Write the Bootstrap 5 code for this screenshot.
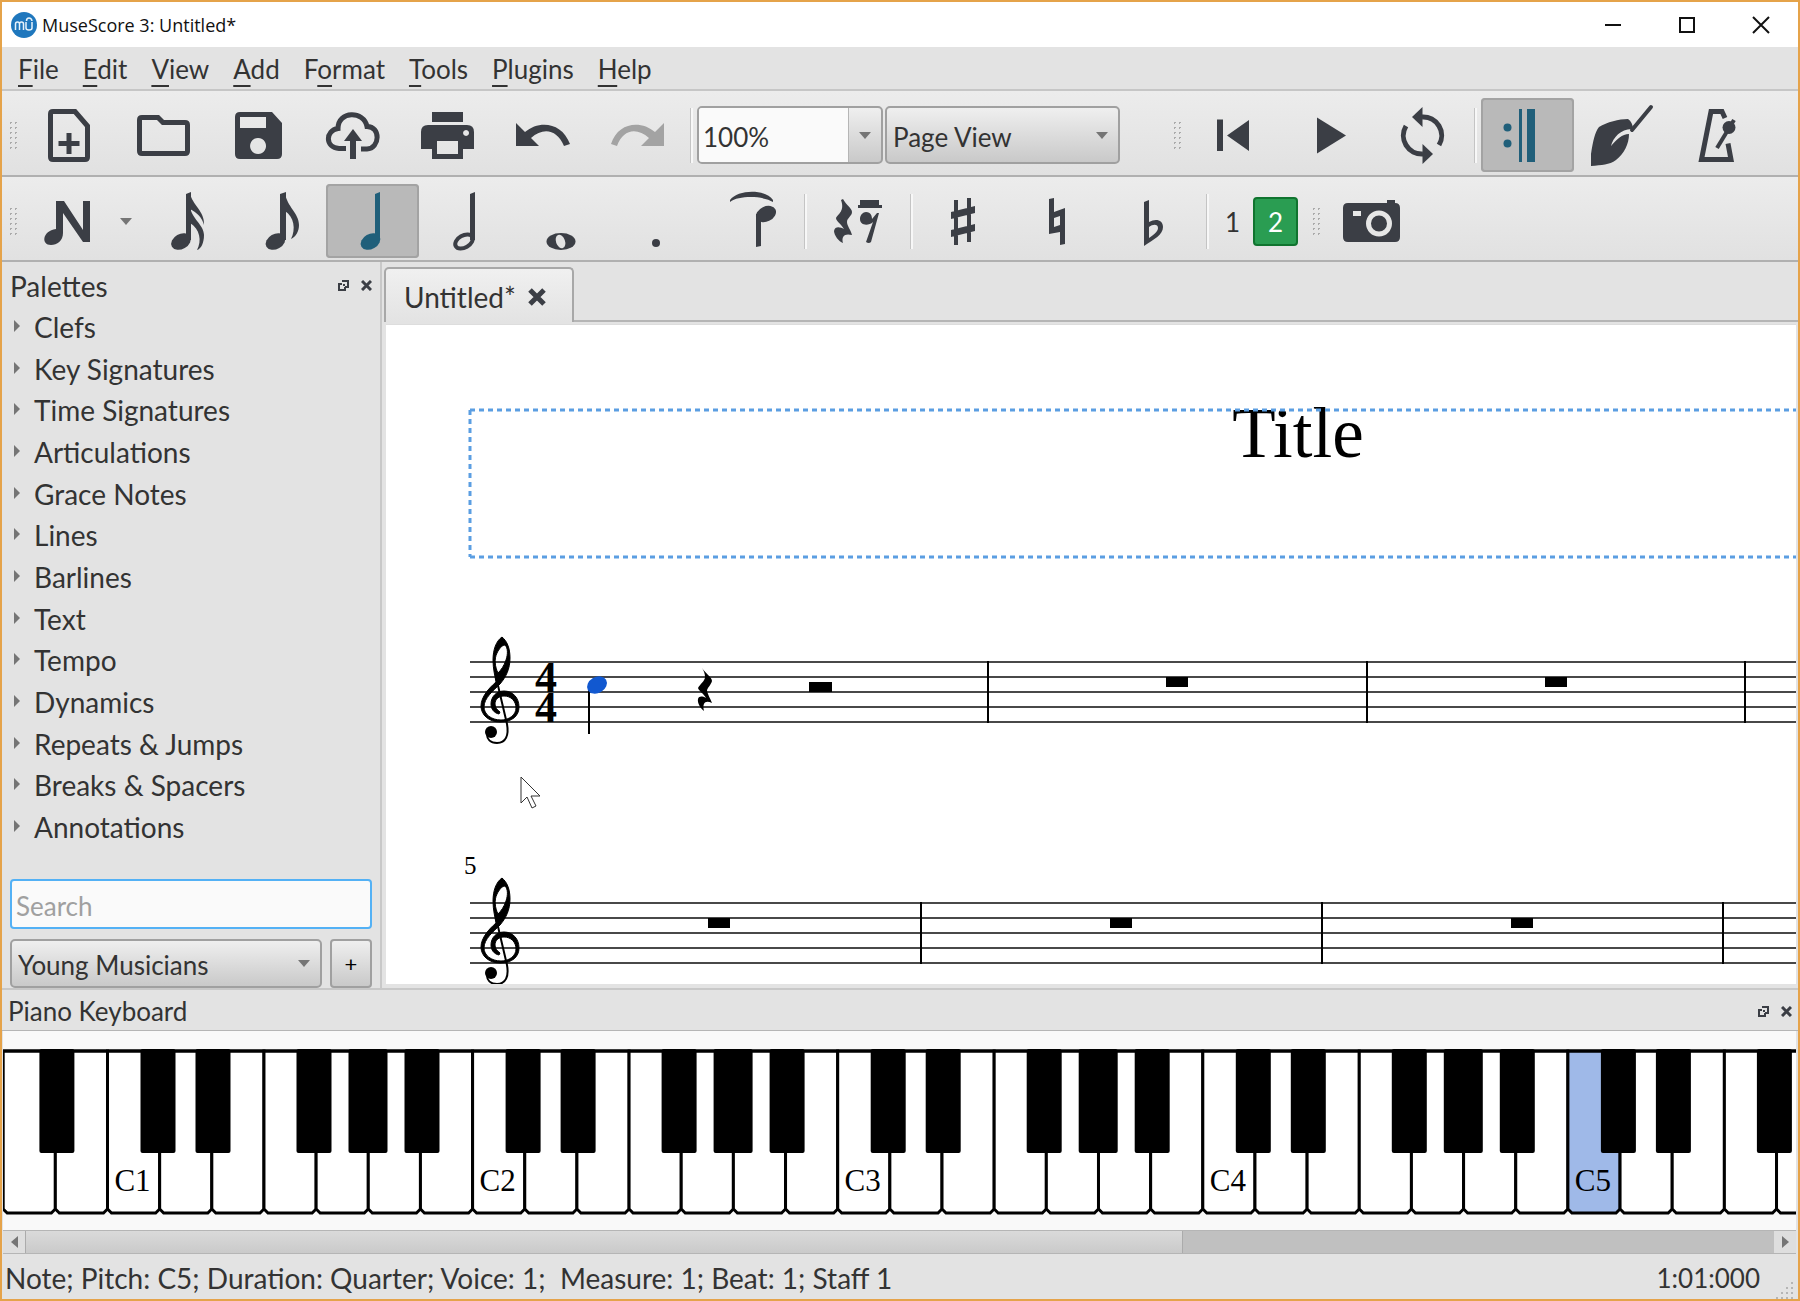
<!DOCTYPE html>
<html lang="en">
<head>
<meta charset="utf-8">
<meta name="viewport" content="width=device-width, initial-scale=1">
<title>MuseScore 3: Untitled*</title>
<link href="https://cdn.jsdelivr.net/npm/bootstrap@5.3.0/dist/css/bootstrap.min.css" rel="stylesheet">
<style>
:root { --ink: #3b3e45; --face: #e3e3e3; --edge: #a0a0a0; }
body { font-family: "Lato", sans-serif; font-size: 26px; line-height: 32px; color: #333; background: var(--face); }
.app-window { height: 100vh; border: 2px solid #e5a34a; overflow: hidden; }
.title-bar { height: 45px; background: #fff; color: #111; font-family: "Open Sans", sans-serif; font-size: 18px; }
.title-bar button { width: 74px; height: 45px; }
.menu-bar { height: 44px; padding: 2px 16px 0; gap: 24px; border-bottom: 2px solid #c6c6c6; }
.menu-bar a { color: #333; text-decoration: none; }
.menu-bar u { text-underline-offset: 6px; text-decoration-thickness: 2px; }
.tool-strip { background: linear-gradient(#ececec, #e1e1e1); border-bottom: 2px solid #b0b0b0; gap: 2px; }
.strip-main { height: 86px; padding-top: 4px; }
.strip-notes { height: 85px; padding-top: 5px; }
.tool-btn { width: 93px; height: 74px; padding: 0; border: 0; background: none; color: var(--ink); flex: none; }
.tool-btn svg, .piano svg, .score svg, .plain-btn svg { display: block; }
.tool-btn[aria-pressed="true"] { background: #b9b9b9; box-shadow: inset 0 0 0 2px #a3a3a3; border-radius: 4px; color: #205f7a; }
.grip { width: 10px; height: 30px; margin: 0 3px 0 6px; flex: none; background: radial-gradient(circle, #aaa 1px, transparent 1px) 0 0 / 5px 5px; }
.grip-play { margin-left: 50px; }
.grip-capture { margin-left: 11px; }
.divider { width: 3px; height: 55px; margin: 0 2px; flex: none; background: #c4c4c4; border-right: 2px solid #f7f7f7; }
.strip-notes .divider { margin: 0 3px; }
.plain-btn { border: 0; padding: 0; background: none; color: var(--ink); }
.options-btn { width: 16px; }
.combo, .combo-edit { border: 2px solid var(--edge); border-radius: 5px; color: #333; font-size: 26px; }
.combo { appearance: none; padding: 3px 6px 0; background: url("data:image/svg+xml,%3Csvg xmlns='http://www.w3.org/2000/svg' width='12' height='7'%3E%3Cpath d='M0 0h12l-6 7z' fill='%23757575'/%3E%3C/svg%3E") no-repeat right 10px center, linear-gradient(#efefef, #c9c9c9); }
.combo-edit { width: 186px; overflow: hidden; background: linear-gradient(#efefef, #c9c9c9); }
.combo-edit input { min-width: 0; border: 0; border-right: 1px solid #b5b5b5; background: #fafafa; color: #333; padding: 3px 4px 0; }
.combo-edit button { width: 32px; flex: none; }
.strip-combo { height: 58px; }
.view-combo { width: 235px; }
.voice-btn { width: 37px; height: 49px; padding: 2px 0 0; border: 0; background: none; color: #333; font-size: 26px; }
.voice-btn[aria-pressed="true"] { width: 45px; background: #2a9d52; color: #fff; border: 2px solid #10742f; border-radius: 4px; }
.main-area { min-height: 0; }
.palette-dock { width: 380px; border-right: 2px solid #c8c8c8; padding: 0 8px; }
.dock-head { height: 43px; gap: 12px; padding-top: 4px; font-size: 28px; }
.palette-list { display: grid; grid-auto-rows: 1fr; flex: 1 1 0; padding: 0; margin: 0; list-style: none; font-size: 28px; }
.palette-list li { display: flex; align-items: center; gap: 14px; padding-left: 4px; }
.palette-list span { padding-top: 2px; }
.search-box { height: 50px; margin-top: 32px; border: 2px solid #53b1f5; border-radius: 4px; background: #fafafa; padding: 3px 4px 0; width: 100%; outline: 0; color: #333; }
.search-box::placeholder { color: #a0a0a0; opacity: 1; }
.palette-foot { height: 49px; margin-top: 10px; }
.add-btn { width: 42px; border: 2px solid var(--edge); border-radius: 4px; background: linear-gradient(#efefef, #c9c9c9); font-size: 22px; padding: 0; }
.doc-area { padding-left: 2px; }
.tabs-row { height: 60px; padding-top: 5px; border-bottom: 2px solid #b5b5b5; }
.doc-tab { height: 55px; width: 190px; padding: 2px 18px 0; gap: 12px; border: 2px solid #a8a8a8; border-bottom: 0; border-radius: 5px 5px 0 0; background: linear-gradient(#f0f0f0, #e3e3e3); font-size: 28px; }
.score { background: #fff; border-top: 1px solid #ddd; margin: 2px 2px 4px 2px; min-height: 0; overflow: hidden; }
.score text, .piano text { font-family: "Liberation Serif", serif; fill: #000; }
.piano-head { height: 43px; gap: 12px; padding: 2px 6px 0; border-top: 2px solid #c8c8c8; border-bottom: 1px solid #b5b5b5; }
.piano { height: 199px; margin: 0 2px 0 1px; background: #f9f9f9; overflow: hidden; }
.scroll-strip { height: 24px; margin: 0 2px 0 1px; background: #c0c0c0; border: 1px solid #b5b5b5; border-width: 1px 0; }
.scroll-strip button { width: 22px; background: #dedede; }
.scroll-thumb { width: 1158px; background: linear-gradient(#dadada, #cacaca); border: 1px solid #ababab; border-width: 0 1px; }
.status-bar { height: 45px; padding: 3px 4px 0 3px; }
.status-note { font-size: 28px; }
.size-grip { width: 18px; height: 18px; }
</style>
</head>
<body>
<div class="app-window d-flex flex-column">
  <header class="title-bar d-flex align-items-center flex-shrink-0">
    <svg class="ms-2 me-1" width="28" height="28" viewBox="0 0 28 28" aria-hidden="true"><circle cx="14" cy="14" r="13" fill="#1f77bd"/><path d="M5.500 19v-6q0-2 2-2t2 2v6m0-6q0-2 2-2t2 2v6M16 11v6q0 2 3 2t3-2v-6M16.500 10q0-3 2.500-3t3 3" fill="none" stroke="#e8f3fb" stroke-width="1.500"/></svg>
    <span>MuseScore 3: Untitled*</span>
    <div class="ms-auto d-flex">
      <button class="plain-btn" aria-label="Minimize"><svg class="mx-auto" width="18" height="18" stroke="#111" stroke-width="2"><path d="M1 9h16"/></svg></button>
      <button class="plain-btn" aria-label="Maximize"><svg class="mx-auto" width="18" height="18" stroke="#111" stroke-width="2" fill="none"><path d="M2 2h14v14H2z"/></svg></button>
      <button class="plain-btn" aria-label="Close"><svg class="mx-auto" width="18" height="18" stroke="#111" stroke-width="2"><path d="M1 1l16 16M17 1L1 17"/></svg></button>
    </div>
  </header>

  <nav class="menu-bar d-flex align-items-center flex-shrink-0" aria-label="Main menu">
    <a href="#"><u>F</u>ile</a><a href="#"><u>E</u>dit</a><a href="#"><u>V</u>iew</a><a href="#"><u>A</u>dd</a><a href="#">F<u>o</u>rmat</a><a href="#"><u>T</u>ools</a><a href="#"><u>P</u>lugins</a><a href="#"><u>H</u>elp</a>
  </nav>

  <div class="tool-strip strip-main d-flex align-items-center flex-shrink-0" role="toolbar" aria-label="File and playback">
    <span class="grip"></span>
    <button class="tool-btn" aria-label="New"><svg width="93" height="74" viewBox="23 98 93 74"><path d="M53 111.500H75L87.500 126V157q0 2.500-2.500 2.500H53q-2.500 0-2.500-2.500V114q0-2.500 2.500-2.500z" fill="none" stroke="currentColor" stroke-width="5"/><path d="M69 133v21M58.500 143.500h21" stroke="currentColor" stroke-width="5"/></svg></button>
    <button class="tool-btn" aria-label="Open"><svg width="93" height="74" viewBox="118 98 93 74"><path d="M142 117.500h16l5 5h22q2.500 0 2.500 2.500v26q0 2.500-2.500 2.500h-43q-2.500 0-2.500-2.500v-31q0-2.500 2.500-2.500z" fill="none" stroke="currentColor" stroke-width="5"/></svg></button>
    <button class="tool-btn" aria-label="Save"><svg width="93" height="74" viewBox="213 98 93 74"><path fill="currentColor" fill-rule="evenodd" d="M240 112h32l10 11v31q0 5-5 5h-37q-5 0-5-5v-37q0-5 5-5zm0 5v11h26v-11zm18 21a8 8 0 1 0 .1 0z"/></svg></button>
    <button class="tool-btn" aria-label="Save online"><svg width="93" height="74" viewBox="308 98 93 74"><path d="M346 148.500h-7c-14-1-14-18-1-20c0-18 26-18 29-2c14 0 13 22 0 22.500h-6" fill="none" stroke="currentColor" stroke-width="5"/><path d="M353 159v-20" stroke="currentColor" stroke-width="6"/><path d="M353 129l9 12h-18z" fill="currentColor"/></svg></button>
    <button class="tool-btn" aria-label="Print"><svg width="93" height="74" viewBox="403 98 93 74"><path fill="currentColor" fill-rule="evenodd" d="M432 112h31v10h-31zM428 125h39q7 0 7 7v17h-11v10h-31v-10h-11v-17q0-7 7-7zm9 16v13h21v-13zM466 130a3 3 0 1 0 .1 0z"/></svg></button>
    <button class="tool-btn" aria-label="Undo"><svg width="93" height="74" viewBox="498 98 93 74"><path fill="currentColor" d="M516 123l9 9C539 120 562 122 570 144l-6 2C557 129 543 127 531 138l8 8h-23z"/></svg></button>
    <button class="tool-btn" aria-label="Redo" disabled><svg width="93" height="74" viewBox="593 98 93 74"><path fill="#a3a3a3" d="M664 123l-9 9C641 120 618 122 611 144l6 2C623 129 637 127 649 138l-8 8h23z"/></svg></button>
    <span class="divider"></span>
    <div class="combo-edit strip-combo d-flex flex-shrink-0">
      <input type="text" class="flex-grow-1" value="100%" aria-label="Zoom">
      <button class="plain-btn" aria-label="Zoom levels"><svg class="mx-auto" width="12" height="7"><path d="M0 0h12l-6 7z" fill="#757575"/></svg></button>
    </div>
    <select class="combo strip-combo view-combo flex-shrink-0" aria-label="View mode"><option>Page View</option></select>
    <span class="grip grip-play"></span>
    <button class="tool-btn" aria-label="Rewind"><svg width="93" height="74" viewBox="1186 98 93 74"><path fill="currentColor" d="M1216 119.500h6v31.500h-6zM1226 135.500l22-15.500v31z"/></svg></button>
    <button class="tool-btn" aria-label="Play"><svg width="93" height="74" viewBox="1281 98 93 74"><path fill="currentColor" d="M1316 117.500l29 18-29 18z"/></svg></button>
    <button class="tool-btn" aria-label="Loop"><svg width="93" height="74" viewBox="1376 98 93 74"><g id="loop-half"><path fill="none" stroke="currentColor" stroke-width="5" d="M1421 117a18.500 18.500 0 0 1 17 28"/><path fill="currentColor" d="M1411 117l10.500-10v20z"/></g><use href="#loop-half" transform="rotate(180 1421.500 135.500)"/></svg></button>
    <span class="divider"></span>
    <button class="tool-btn" aria-label="Play repeats" aria-pressed="true"><svg width="93" height="74" viewBox="1481 98 93 74" fill="currentColor"><circle cx="1507.500" cy="127.500" r="4"/><circle cx="1507.500" cy="143.500" r="4"/><path d="M1519 109h3v53h-3zM1527 109h8v53h-8z"/></svg></button>
    <button class="tool-btn" aria-label="Pan score"><svg width="93" height="74" viewBox="1576 98 93 74"><path d="M1651 107l-19 23" stroke="currentColor" stroke-width="4" stroke-linecap="round"/><path fill="currentColor" d="M1591 166v-12c2-13 4-22 8-27c8-5 20-8 29-8c3 2 5 6 5 10c-11-1-20 8-22 17c6-7 11-12 18-12c0 10-5 20-13 26c-7 5-14 5-25 6z"/></svg></button>
    <button class="tool-btn" aria-label="Metronome"><svg width="93" height="74" viewBox="1671 98 93 74"><path d="M1725 118l-3-6.500h-11l-9.500 48h29.500l-3-16" fill="none" stroke="currentColor" stroke-width="5"/><circle cx="1729" cy="127.500" r="6.500" fill="currentColor"/><path d="M1734 120l-17 28" stroke="currentColor" stroke-width="4"/></svg></button>
  </div>

  <div class="tool-strip strip-notes d-flex align-items-center flex-shrink-0" role="toolbar" aria-label="Note input">
    <span class="grip"></span>
    <button class="tool-btn" aria-label="Note input mode"><svg width="93" height="74" viewBox="23 185 93 74"><path fill="currentColor" d="M56 202h8l19 29v-29h7v41h-7l-20-29v20c0 8-6 12-12 12c-10 0-9-14 5-16z"/></svg></button>
    <button class="plain-btn options-btn" aria-label="Input mode options"><svg class="mx-auto" width="12" height="7"><path d="M0 0h12l-6 7z" fill="#757575"/></svg></button>
    <button class="tool-btn" aria-label="16th note"><svg width="93" height="74" viewBox="136 185 93 74" fill="currentColor"><ellipse cx="181" cy="242.500" rx="10.500" ry="7.500" transform="rotate(-30 181 242.500)"/><path d="M186 195l5-2v48h-5z"/><path d="M190 194c2 12 15 18 14 32c-2-8-7-12-14-16zM190 208c2 12 14 18 14 28c0 8-3 14-7 15c5-9 3-21-7-27z"/></svg></button>
    <button class="tool-btn" aria-label="Eighth note"><svg width="93" height="74" viewBox="231 185 93 74" fill="currentColor"><ellipse cx="275.500" cy="242.500" rx="10.500" ry="7.500" transform="rotate(-30 275.500 242.500)"/><path d="M280 195l6-2v48h-6z"/><path d="M285 194c2 14 14 20 14 32c0 6-3 12-8 14c5-10 3-22-6-28z"/></svg></button>
    <button class="tool-btn" aria-label="Quarter note" aria-pressed="true"><svg width="93" height="74" viewBox="326 185 93 74" fill="currentColor"><ellipse cx="370.500" cy="242.500" rx="10.500" ry="7.500" transform="rotate(-30 370.500 242.500)"/><path d="M375 195l5-2v48h-5z"/></svg></button>
    <button class="tool-btn" aria-label="Half note"><svg width="93" height="74" viewBox="421 185 93 74"><ellipse cx="464" cy="242.500" rx="9.500" ry="6" fill="none" stroke="currentColor" stroke-width="4" transform="rotate(-30 464 242.500)"/><path fill="currentColor" d="M470 195l5-2v48h-5z"/></svg></button>
    <button class="tool-btn" aria-label="Whole note"><svg width="93" height="74" viewBox="516 185 93 74"><ellipse cx="561" cy="242.500" rx="14.500" ry="8.500" fill="currentColor"/><ellipse cx="560.500" cy="242.500" rx="4.500" ry="7" fill="#e3e3e3" transform="rotate(-20 560.500 242.500)"/></svg></button>
    <button class="tool-btn" aria-label="Augmentation dot"><svg width="93" height="74" viewBox="611 185 93 74"><circle cx="656" cy="244" r="4" fill="currentColor"/></svg></button>
    <button class="tool-btn" aria-label="Tie"><svg width="93" height="74" viewBox="706 185 93 74" fill="currentColor"><path d="M730 201c8-11 36-11 43 0v2c-9-6-34-7-43 0z"/><ellipse cx="766" cy="215" rx="10.500" ry="7.500" transform="rotate(-25 766 215)"/><path d="M756 215h5v32l-5 1z"/></svg></button>
    <span class="divider"></span>
    <button class="tool-btn" aria-label="Rest"><svg width="93" height="74" viewBox="812 185 93 74" fill="currentColor"><path d="M843 200c3 6 9 9 9 13c0 4-5 6-5 10c0 4 4 8 5 13c-7-2-11 1-9 8c-4-1-9-8-9-12c1-5 6-4 10-2c-3-5-8-8-8-11c2-4 9-7 5-18z"/><path d="M860 201h19v5h3v3h-24v-3h2zM866 213c5 0 6 4 6 7l5-6h2l-8 29q-2 2-5 0l7-20c-4 4-13 4-13-3c0-4 3-7 6-7z"/></svg></button>
    <span class="divider"></span>
    <button class="tool-btn" aria-label="Sharp"><svg width="93" height="74" viewBox="918 185 93 74" fill="currentColor"><path d="M954 201h4v45h-4zM967 199h4v44h-4zM951 213l24-6v7l-24 6zM951 231l24-6v7l-24 6z"/></svg></button>
    <button class="tool-btn" aria-label="Natural"><svg width="93" height="74" viewBox="1013 185 93 74"><path fill="currentColor" fill-rule="evenodd" d="M1049 200l5-1v14l11-4v36l-5 1v-13l-11 2zM1054 219v9l6-2v-9z"/></svg></button>
    <button class="tool-btn" aria-label="Flat"><svg width="93" height="74" viewBox="1108 185 93 74"><path fill="currentColor" fill-rule="evenodd" d="M1144 203l5-2v22c7-4 14-2 14 5c0 8-9 12-19 19zM1149 228v11c5-3 9-7 9-10c0-4-5-4-9-1z"/></svg></button>
    <span class="divider"></span>
    <button class="voice-btn" aria-label="Voice 1">1</button>
    <button class="voice-btn" aria-label="Voice 2" aria-pressed="true">2</button>
    <span class="grip grip-capture"></span>
    <button class="tool-btn" aria-label="Image capture"><svg width="93" height="74" viewBox="1326 185 93 74"><path fill="currentColor" fill-rule="evenodd" d="M1348 204h39v-3h8v3q5 0 5 5v29q0 5-5 5h-47q-5 0-5-5v-29q0-5 5-5zm5 8v5h8v-5z"/><circle cx="1379" cy="224.500" r="10.500" fill="currentColor" stroke="#e6e6e6" stroke-width="5"/></svg></button>
  </div>

  <div class="main-area d-flex flex-grow-1">
    <aside class="palette-dock d-flex flex-column flex-shrink-0" aria-label="Palettes">
      <div class="dock-head d-flex align-items-center">
        <span>Palettes</span>
        <button class="plain-btn ms-auto" aria-label="Float"><svg width="11" height="11" fill="none" stroke="currentColor" stroke-width="2"><path d="M4 1h6v6H7M5 5h2M4 4H1v6h6V7"/></svg></button>
        <button class="plain-btn" aria-label="Close palettes"><svg width="11" height="11" stroke="currentColor" stroke-width="3"><path d="M1 1l9 9M10 1l-9 9"/></svg></button>
      </div>
      <ul class="palette-list" id="palettes"></ul>
      <input class="search-box flex-shrink-0" type="search" placeholder="Search" aria-label="Search palettes">
      <div class="palette-foot d-flex flex-shrink-0">
        <select class="combo flex-grow-1" aria-label="Workspace"><option>Young Musicians</option></select>
        <button class="add-btn ms-2" aria-label="Add workspace">+</button>
      </div>
    </aside>

    <main class="doc-area d-flex flex-column flex-grow-1 overflow-hidden">
      <div class="tabs-row d-flex flex-shrink-0">
        <div class="doc-tab d-flex align-items-center">Untitled*
          <button class="plain-btn" aria-label="Close tab"><svg width="18" height="18" stroke="currentColor" stroke-width="5"><path d="M2 2l14 14M16 2L2 16"/></svg></button>
        </div>
      </div>
      <div class="score flex-grow-1">
        <svg width="100%" height="100%" role="img" aria-label="Score">
          <defs>
            <g id="staff-lines" stroke="#484848" stroke-width="2"><path d="M84 0H3000M84 15H3000M84 30H3000M84 45H3000M84 60H3000"/></g>
            <g id="treble-clef" transform="translate(-386 -662)">
              <path stroke="#000" stroke-width="1" fill-rule="evenodd" d="M502 637C496 641 493 650 493 660C493 669 495 676 496 682C489 688 481 697 481 706C481 715 489 722 500 722C512 722 519 716 519 707C519 698 513 691 504 691C496 691 491 697 491 704C491 709 494 713 499 714L500 712C497 710 495 707 495 704C495 699 499 696 504 696C511 696 516 701 516 708C516 715 509 720 501 720C491 720 484 714 484 707C484 698 493 691 500 684C506 677 510 669 510 658C510 648 507 641 502 637ZM505 645C508 648 508 654 506 660C504 666 501 670 498 673C495 667 494 659 497 653C499 649 502 645 505 645Z"/>
              <path d="M496 677l11 47C509 735 506 743 497 743C490 743 487 739 487 734" fill="none" stroke="#000" stroke-width="2"/>
              <circle cx="491" cy="732" r="6"/>
            </g>
            <path id="whole-rest" d="M-11 0h22v10h-22z"/>
          </defs>
          <text x="912" y="132" font-size="71" text-anchor="middle">Title</text>
          <path d="M84 85H3000M84 232H3000M84 85v147" fill="none" stroke="#5b9ee2" stroke-width="3" stroke-dasharray="5 4"/>
          <g transform="translate(0 337)">
            <use href="#staff-lines"/><use href="#treble-clef"/>
            <g font-size="44" font-weight="bold" text-anchor="middle"><text x="160" y="30">4</text><text x="160" y="60">4</text></g>
            <path d="M203 22v50" stroke="#000" stroke-width="2"/>
            <ellipse cx="211" cy="23" rx="10.500" ry="8" fill="#1158d0" transform="rotate(-30 211 23)"/>
            <path d="M316 6c3 5 10 9 10 13c-1 4-5 7-5 10c1 4 3 7 5 12c-6-3-10-1-8 8c-3-2-7-8-6-12c1-3 4-3 8-1c-2-4-7-7-8-10c2-4 7-7 7-11c0-3-1-6-3-9z"/>
            <path d="M423 20h23v10h-23z"/>
            <use href="#whole-rest" x="791" y="15"/><use href="#whole-rest" x="1170" y="15"/>
            <path d="M602-1v62M981-1v62M1359-1v62" stroke="#000" stroke-width="2"/>
          </g>
          <g transform="translate(0 578)">
            <text x="78" y="-29" font-size="25">5</text>
            <use href="#staff-lines"/><use href="#treble-clef"/>
            <use href="#whole-rest" x="333" y="15"/><use href="#whole-rest" x="735" y="15"/><use href="#whole-rest" x="1136" y="15"/>
            <path d="M535-1v62M936-1v62M1337-1v62" stroke="#000" stroke-width="2"/>
          </g>
          <path d="M135 452v26l6-6 5 11 4-2-5-10h9z" fill="#fff" stroke="#333" stroke-width="1"/>
        </svg>
      </div>
    </main>
  </div>

  <section class="flex-shrink-0" aria-label="Piano Keyboard">
    <div class="piano-head d-flex align-items-center">
      <span>Piano Keyboard</span>
      <button class="plain-btn ms-auto" aria-label="Float piano"><svg width="11" height="11" fill="none" stroke="currentColor" stroke-width="2"><path d="M4 1h6v6H7M5 5h2M4 4H1v6h6V7"/></svg></button>
      <button class="plain-btn" aria-label="Close piano"><svg width="11" height="11" stroke="currentColor" stroke-width="3"><path d="M1 1l9 9M10 1l-9 9"/></svg></button>
    </div>
    <div class="piano"><svg id="keys" width="100%" height="199" role="img" aria-label="Piano keys"></svg></div>
    <div class="scroll-strip d-flex">
      <button class="plain-btn" aria-label="Scroll left"><svg class="mx-auto" width="7" height="12"><path d="M7 0v12L0 6z" fill="#757575"/></svg></button>
      <div class="scroll-thumb"></div>
      <button class="plain-btn ms-auto" aria-label="Scroll right"><svg class="mx-auto" width="7" height="12"><path d="M0 0v12l7-6z" fill="#757575"/></svg></button>
    </div>
  </section>

  <footer class="status-bar d-flex align-items-center flex-shrink-0">
    <span class="status-note">Note; Pitch: C5; Duration: Quarter; Voice: 1;&nbsp; Measure: 1; Beat: 1; Staff 1</span>
    <span class="ms-auto me-3">1:01:000</span>
    <svg class="size-grip align-self-end" fill="#b5b5b5" aria-hidden="true"><path d="M15 1h2v2h-2zM10 6h2v2h-2zM15 6h2v2h-2zM5 11h2v2H5zM10 11h2v2h-2zM15 11h2v2h-2zM0 16h2v2H0zM5 16h2v2H5zM10 16h2v2h-2zM15 16h2v2h-2z"/></svg>
  </footer>
</div>
<script src="https://cdn.jsdelivr.net/npm/bootstrap@5.3.0/dist/js/bootstrap.bundle.min.js"></script>
<script>
const names = ["Clefs", "Key Signatures", "Time Signatures", "Articulations", "Grace Notes", "Lines", "Barlines", "Text", "Tempo", "Dynamics", "Repeats & Jumps", "Breaks & Spacers", "Annotations"];
document.getElementById("palettes").innerHTML = names.map(n =>
  `<li><svg width="6" height="12" aria-hidden="true"><path d="M0 0v12l6-6z" fill="#757575"/></svg><span>${n.replace("&", "&amp;")}</span></li>`).join("");

// White keys start at A0; octaves are counted from each C.
const octave = 365.1, white = octave / 7, firstC = 104.5;
const black = [[33, 35], [88, 35], [189, 35], [241, 39], [297, 35]];
const keys = document.getElementById("keys");
const visible = keys.parentElement.clientWidth;
let out = "";
for (let i = -2; i < 50 && firstC + i * white < visible; i++) {
  const x = firstC + i * white, isC = i % 7 === 0;
  out += `<path d="M${x} 20V178l4 4H${x + white - 4}l4-4V20z" fill="${i === 28 ? "#9fb9e8" : "#fff"}" stroke="#000" stroke-width="3"/>`;
  if (isC) out += `<text x="${x + 25}" y="160" font-size="31" text-anchor="middle">C${i / 7 + 1}</text>`;
}
for (let o = -1; o < 7; o++) for (const [dx, w] of black) {
  const x = firstC + o * octave + dx;
  if (x > 0 && x < visible) out += `<rect x="${x}" y="18" width="${w}" height="104" rx="2"/>`;
}
keys.innerHTML = out + `<path d="M0 20H3000" stroke="#000" stroke-width="3"/>`;
</script>
</body>
</html>
